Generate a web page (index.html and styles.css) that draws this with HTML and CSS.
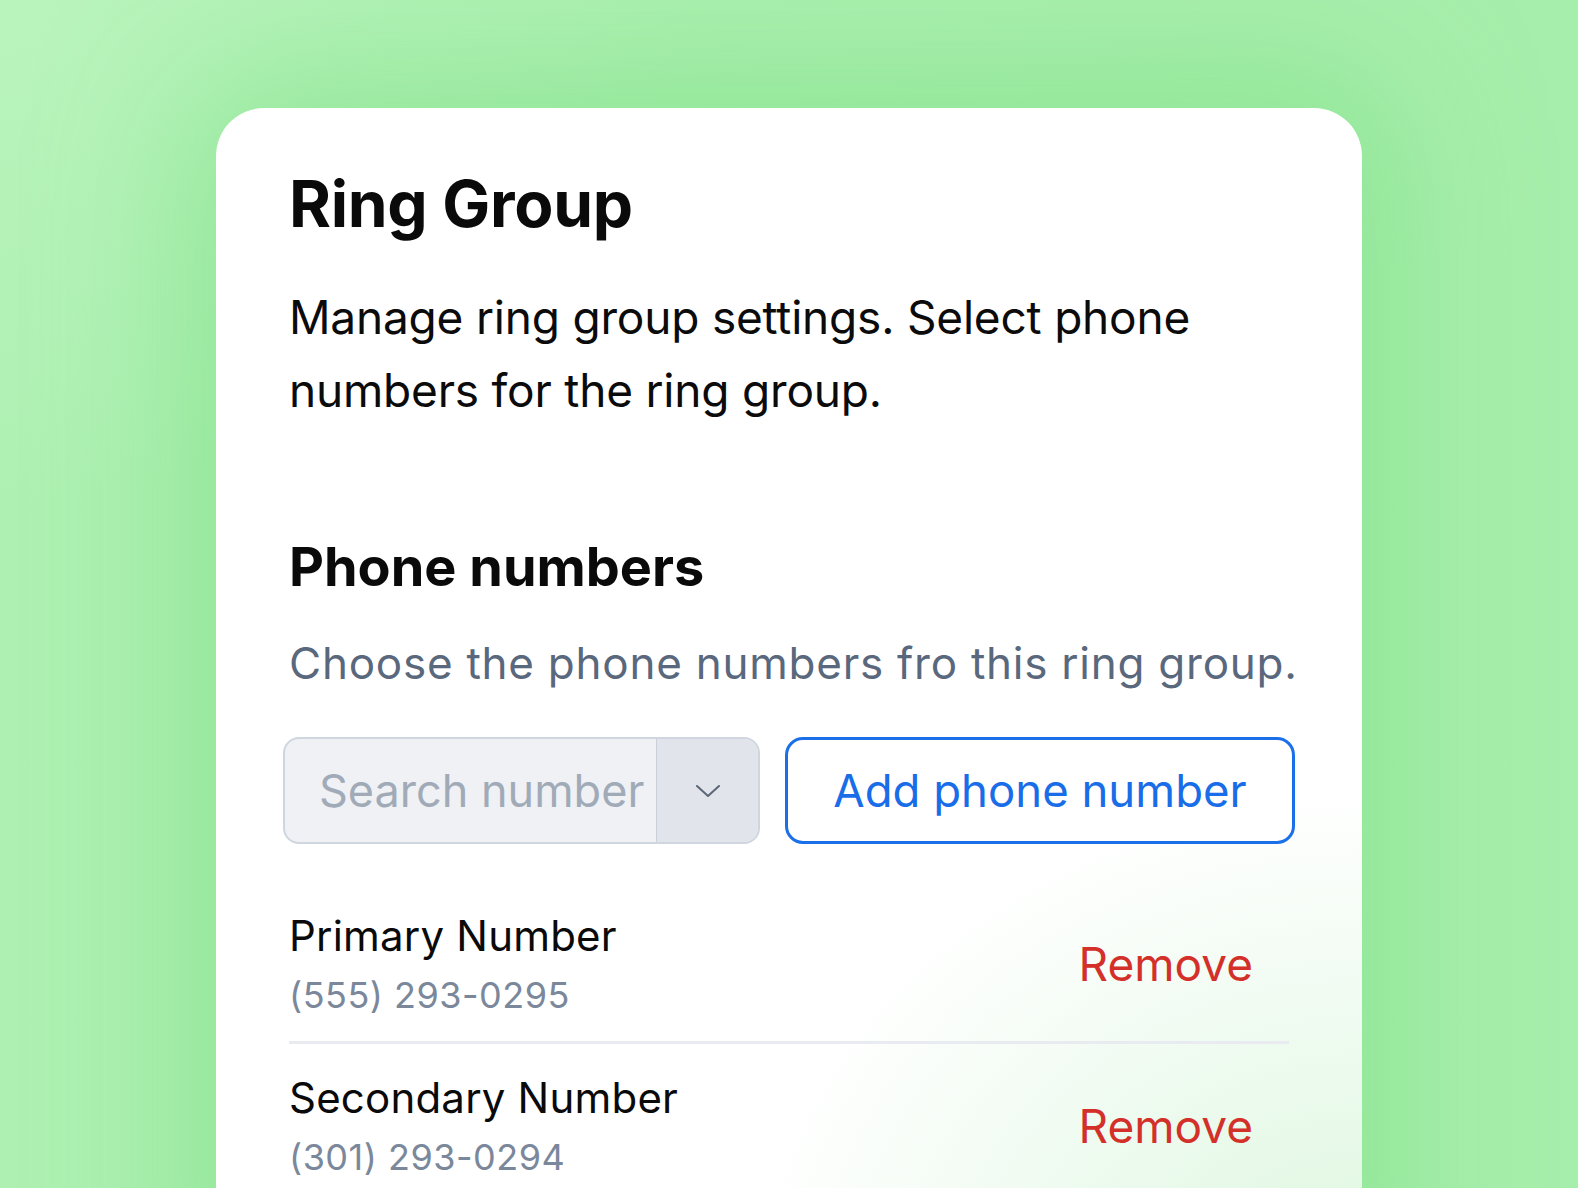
FILE: index.html
```html
<!DOCTYPE html>
<html lang="en">
<head>
    <meta charset="UTF-8">
    <meta name="viewport" content="width=device-width, initial-scale=1.0">
    <title>Ring Group</title>
    <link rel="stylesheet" href="styles.css">
</head>
<body>
    <div class="card">
        <h1 class="title">Ring Group</h1>
        <p class="intro">Manage ring group settings. Select phone numbers for the ring group.</p>

        <h2 class="section-title">Phone numbers</h2>
        <p class="section-text">Choose the phone numbers fro this ring group.</p>

        <div class="controls">
            <div class="search">
                <input class="search-input" type="text" placeholder="Search number">
                <span class="search-toggle">
                    <svg width="24" height="12" viewBox="0 0 24 12">
                        <polyline points="1,1 12,11 23,1" fill="none" stroke="#5b6677" stroke-width="2" stroke-linecap="round" stroke-linejoin="round"/>
                    </svg>
                </span>
            </div>
            <button class="btn-add">Add phone number</button>
        </div>

        <ul class="numbers">
            <li class="number-row">
                <div>
                    <div class="number-name">Primary Number</div>
                    <div class="number-value">(555) 293-0295</div>
                </div>
                <button class="btn-remove">Remove</button>
            </li>
            <li class="number-row">
                <div>
                    <div class="number-name">Secondary Number</div>
                    <div class="number-value">(301) 293-0294</div>
                </div>
                <button class="btn-remove">Remove</button>
            </li>
        </ul>
    </div>
</body>
</html>
```

FILE: styles.css
```css
html, body {
    height: 100%;
}
body {
    margin: 0;
    overflow: hidden;
    font-family: Inter, "Noto Sans", sans-serif;
    background-color: #aef0b2;
    background-image:
        radial-gradient(ellipse 700px 500px at 0 0, #b9f4bd 0%, rgba(185, 244, 189, 0) 100%),
        linear-gradient(90deg, #aef0b2 0%, #a6eeab 100%);
    display: flex;
    justify-content: center;
    padding-top: 108px;
    box-sizing: border-box;
}
.card {
    width: 1146px;
    min-height: 1200px;
    box-sizing: border-box;
    padding: 57px 73px 0;
    border-radius: 48px 48px 0 0;
    background-color: #fff;
    background-image: radial-gradient(ellipse 620px 520px at 100% 100%, #dcf6de 0%, rgba(255, 255, 255, 0) 100%);
    box-shadow: 0 0 140px 30px rgba(120, 222, 130, 0.55);
}
.title {
    margin: 0;
    font-size: 64px;
    line-height: 77px;
    font-weight: 700;
    letter-spacing: -0.3px;
    color: #0a0a0a;
}
.intro {
    margin: 39px 0 0;
    font-size: 46px;
    line-height: 73px;
    letter-spacing: -0.2px;
    color: #0b0b0b;
    max-width: 960px;
}
.section-title {
    margin: 108px 0 0;
    font-size: 54px;
    line-height: 63px;
    font-weight: 700;
    color: #0a0a0a;
}
.section-text {
    margin: 40px -10px 0 0;
    font-size: 44px;
    line-height: 50px;
    letter-spacing: 0.75px;
    white-space: nowrap;
    color: #5a687d;
}
.controls {
    display: flex;
    gap: 25px;
    margin: 49px -6px 0;
    height: 107px;
}
.search {
    width: 477px;
    display: flex;
    box-sizing: border-box;
    border: 2px solid #cfd6df;
    border-radius: 16px;
    background-color: #eff1f5;
    overflow: hidden;
}
.search-input {
    flex: 1;
    min-width: 0;
    border: none;
    background: transparent;
    padding: 0 0 0 34px;
    font-family: inherit;
    font-size: 45px;
    color: #333;
    outline: none;
}
.search-input::placeholder {
    color: #a1abb8;
}
.search-toggle {
    width: 101px;
    display: flex;
    align-items: center;
    justify-content: center;
    background-color: #e1e5eb;
    border-left: 1px solid #c9d0da;
}
.btn-add {
    flex: 1;
    box-sizing: border-box;
    border: 3px solid #1b6fe8;
    border-radius: 18px;
    background-color: #fff;
    color: #1a6de8;
    font-family: inherit;
    font-size: 45.5px;
    cursor: pointer;
}
.numbers {
    list-style: none;
    margin: 38px 0 0;
    padding: 0;
}
.number-row {
    display: flex;
    align-items: center;
    justify-content: space-between;
    padding: 30px 0 25px;
}
.number-row + .number-row {
    border-top: 3px solid #e8ebef;
}
.number-name {
    font-size: 42px;
    line-height: 48px;
    letter-spacing: 0.2px;
    color: #0a0a0a;
}
.number-value {
    margin-top: 14px;
    font-size: 36px;
    line-height: 42px;
    letter-spacing: 0.5px;
    color: #7b889b;
}
.btn-remove {
    border: none;
    background: none;
    padding: 0 36px 0 0;
    font-family: inherit;
    font-size: 46px;
    line-height: 53px;
    color: #d4302a;
    cursor: pointer;
}
```
